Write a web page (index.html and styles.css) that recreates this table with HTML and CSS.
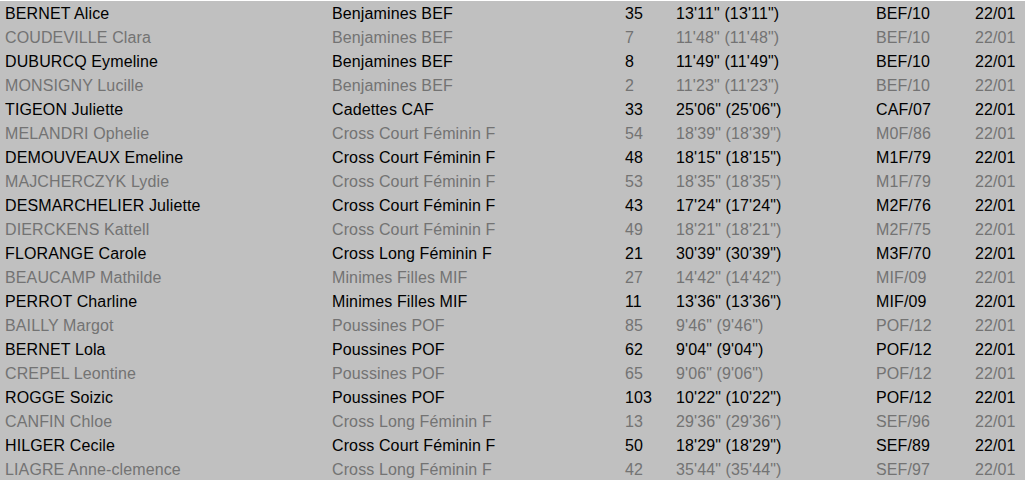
FILE: index.html
```html
<!DOCTYPE html>
<html lang="fr">
<head>
<meta charset="utf-8">
<title>Résultats</title>
<link rel="stylesheet" href="styles.css">
</head>
<body>
<div class="list">
  <div class="row"><span>BERNET Alice</span><span>Benjamines BEF</span><span>35</span><span>13'11" (13'11")</span><span>BEF/10</span><span>22/01</span></div>
  <div class="row dim"><span>COUDEVILLE Clara</span><span>Benjamines BEF</span><span>7</span><span>11'48" (11'48")</span><span>BEF/10</span><span>22/01</span></div>
  <div class="row"><span>DUBURCQ Eymeline</span><span>Benjamines BEF</span><span>8</span><span>11'49" (11'49")</span><span>BEF/10</span><span>22/01</span></div>
  <div class="row dim"><span>MONSIGNY Lucille</span><span>Benjamines BEF</span><span>2</span><span>11'23" (11'23")</span><span>BEF/10</span><span>22/01</span></div>
  <div class="row"><span>TIGEON Juliette</span><span>Cadettes CAF</span><span>33</span><span>25'06" (25'06")</span><span>CAF/07</span><span>22/01</span></div>
  <div class="row dim"><span>MELANDRI Ophelie</span><span>Cross Court Féminin F</span><span>54</span><span>18'39" (18'39")</span><span>M0F/86</span><span>22/01</span></div>
  <div class="row"><span>DEMOUVEAUX Emeline</span><span>Cross Court Féminin F</span><span>48</span><span>18'15" (18'15")</span><span>M1F/79</span><span>22/01</span></div>
  <div class="row dim"><span>MAJCHERCZYK Lydie</span><span>Cross Court Féminin F</span><span>53</span><span>18'35" (18'35")</span><span>M1F/79</span><span>22/01</span></div>
  <div class="row"><span>DESMARCHELIER Juliette</span><span>Cross Court Féminin F</span><span>43</span><span>17'24" (17'24")</span><span>M2F/76</span><span>22/01</span></div>
  <div class="row dim"><span>DIERCKENS Kattell</span><span>Cross Court Féminin F</span><span>49</span><span>18'21" (18'21")</span><span>M2F/75</span><span>22/01</span></div>
  <div class="row"><span>FLORANGE Carole</span><span>Cross Long Féminin F</span><span>21</span><span>30'39" (30'39")</span><span>M3F/70</span><span>22/01</span></div>
  <div class="row dim"><span>BEAUCAMP Mathilde</span><span>Minimes Filles MIF</span><span>27</span><span>14'42" (14'42")</span><span>MIF/09</span><span>22/01</span></div>
  <div class="row"><span>PERROT Charline</span><span>Minimes Filles MIF</span><span>11</span><span>13'36" (13'36")</span><span>MIF/09</span><span>22/01</span></div>
  <div class="row dim"><span>BAILLY Margot</span><span>Poussines POF</span><span>85</span><span>9'46" (9'46")</span><span>POF/12</span><span>22/01</span></div>
  <div class="row"><span>BERNET Lola</span><span>Poussines POF</span><span>62</span><span>9'04" (9'04")</span><span>POF/12</span><span>22/01</span></div>
  <div class="row dim"><span>CREPEL Leontine</span><span>Poussines POF</span><span>65</span><span>9'06" (9'06")</span><span>POF/12</span><span>22/01</span></div>
  <div class="row"><span>ROGGE Soizic</span><span>Poussines POF</span><span>103</span><span>10'22" (10'22")</span><span>POF/12</span><span>22/01</span></div>
  <div class="row dim"><span>CANFIN Chloe</span><span>Cross Long Féminin F</span><span>13</span><span>29'36" (29'36")</span><span>SEF/96</span><span>22/01</span></div>
  <div class="row"><span>HILGER Cecile</span><span>Cross Court Féminin F</span><span>50</span><span>18'29" (18'29")</span><span>SEF/89</span><span>22/01</span></div>
  <div class="row dim"><span>LIAGRE Anne-clemence</span><span>Cross Long Féminin F</span><span>42</span><span>35'44" (35'44")</span><span>SEF/97</span><span>22/01</span></div>
</div>
</body>
</html>
```

FILE: styles.css
```css
html, body {
  margin: 0;
  padding: 0;
  background: #ffffff;
}
body {
  font-family: "Liberation Sans", Arial, sans-serif;
  font-size: 16px;
  color: #000;
}
.list {
  background: #c0c0c0;
  margin-top: 1px;
  padding-top: 1px;
  height: 478px;
  overflow: hidden;
}
.row {
  display: grid;
  grid-template-columns: 327px 293px 51px 200px 99px auto;
  height: 24px;
  line-height: 24px;
  padding-left: 5px;
  white-space: nowrap;
  letter-spacing: 0.12px;
}
.row.dim {
  color: #737373;
}
```
